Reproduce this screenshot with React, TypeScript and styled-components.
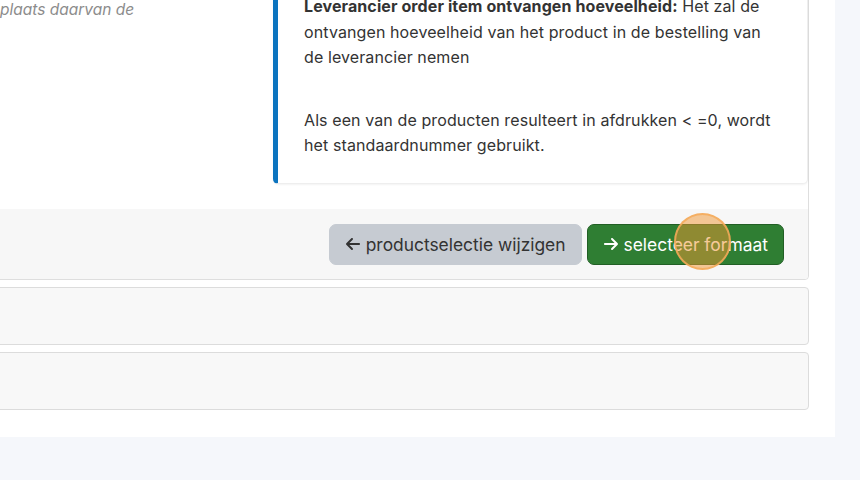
import React from "react";
import styled, { createGlobalStyle } from "styled-components";
import { FaArrowLeft, FaArrowRight } from "react-icons/fa6";

const Global = createGlobalStyle`
  html, body { margin: 0; padding: 0; }
  body {
    background: #f5f7fb;
    font-family: Inter, "Noto Sans", sans-serif;
    overflow: hidden;
    width: 860px;
    height: 480px;
  }
`;

const Page = styled.div`
  width: 886px;
  margin: -58px 0 0 -51px;
  padding: 0 26px 27px 25px;
  box-sizing: border-box;
  background: #ffffff;
`;

const Card = styled.div`
  border: 1px solid #dedede;
  border-radius: 4px;
  background: #fff;
`;

const Body = styled.div`
  display: grid;
  grid-template-columns: 247px 1fr;
  column-gap: 26px;
  padding: 25px 0 25px 25px;
`;

const Hint = styled.p`
  margin: 0;
  padding-top: 6px;
  font-style: italic;
  font-size: 15.5px;
  line-height: 24px;
  color: #8c8c8c;
  white-space: nowrap;
`;

const Callout = styled.div`
  background: #fff;
  border: 1px solid #eeeeee;
  border-left: 5px solid #0c74bf;
  border-radius: 5px;
  box-shadow: 0 1px 2px rgba(0, 0, 0, 0.05);
  padding: 25px 20px 24px 26px;
  font-size: 16px;
  letter-spacing: 0.1px;
  line-height: 25.5px;
  color: #333;
  white-space: nowrap;
`;

const Para = styled.p<{ $top?: number }>`
  margin: ${(p) => p.$top ?? 0}px 0 0 0;
`;

const Footer = styled.div`
  display: flex;
  justify-content: flex-end;
  gap: 5px;
  background: #f7f7f7;
  padding: 15px 24px 14px;
  border-radius: 0 0 4px 4px;
`;

const Button = styled.button<{ $variant: "gray" | "green" }>`
  position: relative;
  display: inline-flex;
  align-items: center;
  gap: 5px;
  height: 41px;
  padding: 0 15px;
  font-family: Inter, "Noto Sans", sans-serif;
  font-size: 17.4px;
  border-radius: 7px;
  cursor: pointer;
  background: ${(p) => (p.$variant === "gray" ? "#c6cbd2" : "#2f7e33")};
  color: ${(p) => (p.$variant === "gray" ? "#333" : "#fff")};
  border: 1px solid ${(p) => (p.$variant === "gray" ? "#c6cbd2" : "#225f25")};
  svg { width: 16px; height: 16px; }
`;

const Click = styled.span`
  position: absolute;
  left: 86px;
  top: -12px;
  width: 53px;
  height: 53px;
  border-radius: 50%;
  background: rgba(240, 150, 50, 0.5);
  border: 2px solid rgba(244, 170, 90, 0.85);
  pointer-events: none;
`;

const Panel = styled.div`
  margin-top: 7px;
  height: 58px;
  box-sizing: border-box;
  border: 1px solid #dcdcdc;
  border-radius: 4px;
  background: #f8f8f8;
`;

export default function App() {
  return (
    <>
      <Global />
      <Page>
        <Card>
          <Body>
            <Hint>
              in het veld Aantal afdrukken wordt in
              <br />
              plaats daarvan de
            </Hint>
            <Callout>
              <Para>
                <b>Leverancier order item ontvangen hoeveelheid:</b> Het zal de
                <br />
                ontvangen hoeveelheid van het product in de bestelling van
                <br />
                de leverancier nemen
              </Para>
              <Para $top={37}>
                Als een van de producten resulteert in afdrukken &lt; =0, wordt
                <br />
                het standaardnummer gebruikt.
              </Para>
            </Callout>
          </Body>
          <Footer>
            <Button $variant="gray">
              <FaArrowLeft /> productselectie wijzigen
            </Button>
            <Button $variant="green">
              <FaArrowRight /> selecteer formaat
              <Click />
            </Button>
          </Footer>
        </Card>
        <Panel />
        <Panel />
      </Page>
    </>
  );
}
